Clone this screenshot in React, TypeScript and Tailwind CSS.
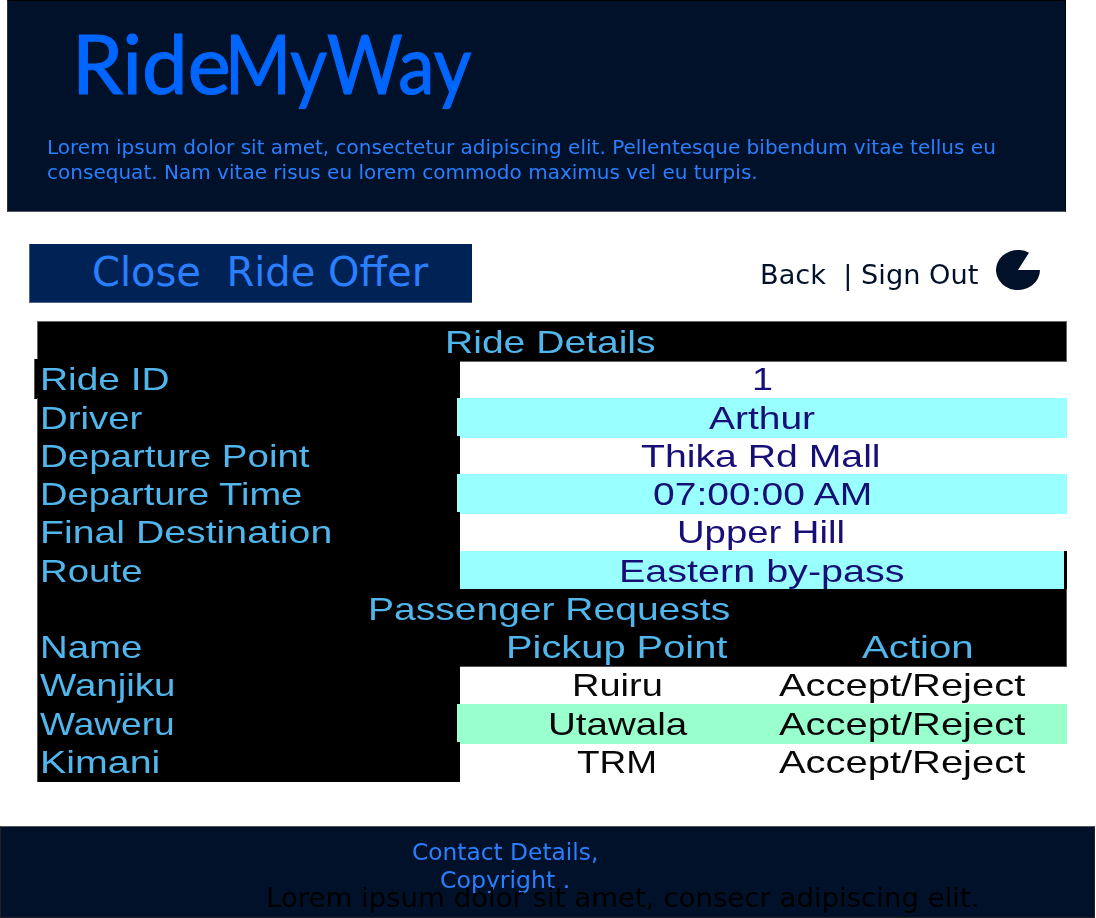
import { useLayoutEffect, useRef } from "react";

type FitProps = { text: string; width: number; className?: string };

/** A single line of text stretched or condensed to an exact width. */
function Fit({ text, width, className = "" }: FitProps) {
  const ref = useRef<HTMLSpanElement>(null);
  useLayoutEffect(() => {
    const el = ref.current;
    if (el) el.style.transform = `scaleX(${width / el.offsetWidth})`;
  }, [text, width]);
  return (
    <span className={`block ${className}`} style={{ width }}>
      <span ref={ref} className="inline-block origin-left whitespace-pre">
        {text}
      </span>
    </span>
  );
}

/** Table text, drawn slightly soft. */
function Cell({ text, width, className = "" }: FitProps) {
  return <Fit text={text} width={width} className={`blur-[0.4px] ${className}`} />;
}

const details = [
  { label: "Ride ID", lw: 130, value: "1", vw: 21, shift: "-ml-[2px]", fill: "", left: "-ml-[3px] w-[426px] pl-[5px]" },
  { label: "Driver", lw: 102, value: "Arthur", vw: 106, shift: "", fill: "-ml-[3px] h-[40px] bg-[#99ffff]", left: "w-[423px] pl-[2px]" },
  { label: "Departure Point", lw: 270, value: "Thika Rd Mall", vw: 239, shift: "-ml-[6px]", fill: "", left: "w-[423px] pl-[2px]" },
  { label: "Departure Time", lw: 262, value: "07:00:00 AM", vw: 219, shift: "", fill: "-ml-[3px] h-[40px] bg-[#99ffff]", left: "w-[423px] pl-[2px]" },
  { label: "Final Destination", lw: 292, value: "Upper Hill", vw: 168, shift: "-ml-[6px]", fill: "", left: "w-[423px] pl-[2px]" },
  { label: "Route", lw: 102, value: "Eastern by-pass", vw: 285, shift: "-ml-[2px]", fill: "h-[38.25px] border-r-[3px] border-black bg-[#99ffff]", left: "w-[423px] pl-[2px]" },
];

const passengers = [
  { name: "Wanjiku", nw: 135, pickup: "Ruiru", pw: 91, fill: "" },
  { name: "Waweru", nw: 135, pickup: "Utawala", pw: 139, fill: "-ml-[3px] h-[40px] bg-[#99ffcc] pl-[3px]" },
  { name: "Kimani", nw: 120, pickup: "TRM", pw: 80, fill: "" },
];

export default function App() {
  return (
    <div className="flex h-[918px] w-[1096px] flex-col overflow-hidden bg-white font-['DejaVu_Sans',sans-serif]">
      <header className="ml-[7px] h-[212px] w-[1059px] shrink-0 border border-t-black border-r-black border-b-[#555b66] border-l-[#333333] bg-[#001129] pl-[39px]">
        <h1 className="flex pt-[10px] pl-[25px] font-['Lato',sans-serif] text-[81px] leading-[104px] text-[#0066ff] [-webkit-text-stroke:1.2px_#0066ff]">
          <Fit text="Ride" width={159} />
          <Fit text="My" width={102} className="-ml-[6px]" />
          <Fit text="Way" width={144} />
        </h1>
        <p className="pt-[20px] text-[20px] leading-[25px] text-[#2a7fff]">
          <Fit text="Lorem ipsum dolor sit amet, consectetur adipiscing elit. Pellentesque bibendum vitae tellus eu" width={949} />
          <Fit text="consequat. Nam vitae risus eu lorem commodo maximus vel eu turpis." width={711} />
        </p>
      </header>

      <div className="flex h-[109px] shrink-0 items-start pt-[32px] pl-[29px]">
        <div className="h-[59px] w-[443px] border-b border-l border-[#4d6485] bg-[#002255] pl-[62px] text-[40px] leading-[56px] text-[#2a7fff]">
          <Fit text="Close  Ride Offer" width={336} />
        </div>
        <nav className="ml-[288px] flex pt-[14px] text-[26.7px] leading-[34px] text-[#001129]">
          <Fit text="Back  | Sign Out" width={218} />
        </nav>
        <svg className="mt-[6px] ml-[18px]" width="44" height="40" viewBox="0 0 44 40">
          <path d="M22 20H44A22 20 0 1 1 33 2.68Z" fill="#001129" />
        </svg>
      </div>

      <main className="ml-[37px] h-[505px] w-[1030px] shrink-0 font-['Liberation_Sans',sans-serif] text-[30.5px] leading-[41px] text-[#50b6ec]">
        <div className="relative flex h-[38.25px]">
          <div className="flex h-[41px] w-full justify-center border border-[#666666] bg-black leading-[40px]">
            <Cell text="Ride Details" width={210} className="-ml-[4px]" />
          </div>
        </div>
        {details.map((row) => (
          <div key={row.label} className="flex h-[38.25px]">
            <div className={`${row.left} relative h-[40px] shrink-0 border-l border-[#555555] bg-black`}>
              <Cell text={row.label} width={row.lw} />
            </div>
            <div className={`relative flex flex-1 justify-center text-[#170f78] ${row.fill}`}>
              <Cell text={row.value} width={row.vw} className={row.shift} />
            </div>
          </div>
        ))}
        <div className="relative h-[78.5px] border-r border-b border-l border-[#555555] bg-black">
          <div className="flex h-[38.25px] justify-center">
            <Cell text="Passenger Requests" width={362} className="-ml-[7px]" />
          </div>
          <div className="flex h-[38.25px]">
            <div className="w-[422px] pl-[2px]"><Cell text="Name" width={102} /></div>
            <div className="flex w-[314px] justify-center"><Cell text="Pickup Point" width={222} /></div>
            <div className="flex flex-1 justify-center"><Cell text="Action" width={112} className="-ml-[4px]" /></div>
          </div>
        </div>
        <div className="-mt-[2px]">
          {passengers.map((row) => (
            <div key={row.name} className="flex h-[38.25px]">
              <div className="relative h-[40px] w-[423px] shrink-0 border-l border-[#555555] bg-black pl-[2px]">
                <Cell text={row.name} width={row.nw} />
              </div>
              <div className={`relative flex flex-1 text-[#080808] ${row.fill}`}>
                <div className="flex w-[314px] justify-center"><Cell text={row.pickup} width={row.pw} /></div>
                <div className="pl-[5px]"><Cell text="Accept/Reject" width={246} /></div>
              </div>
            </div>
          ))}
        </div>
      </main>

      <footer className="relative h-[92px] w-[1095px] shrink-0 border border-t-[#555555] border-r-[#222222] border-b-[#222222] border-l-[#222222] bg-[#001129]">
        <div className="pt-[11px] pl-[411px] text-[22.7px] leading-[28px] text-[#2a7fff]">
          <Fit text="Contact Details," width={186} />
          <Fit text="Copyright ." width={130} className="ml-[28px]" />
        </div>
        <div className="absolute top-[54px] left-[265px] text-[26.7px] leading-[34px] text-black">
          <Fit text="Lorem ipsum dolor sit amet, consecr adipiscing elit." width={714} />
        </div>
      </footer>
    </div>
  );
}
